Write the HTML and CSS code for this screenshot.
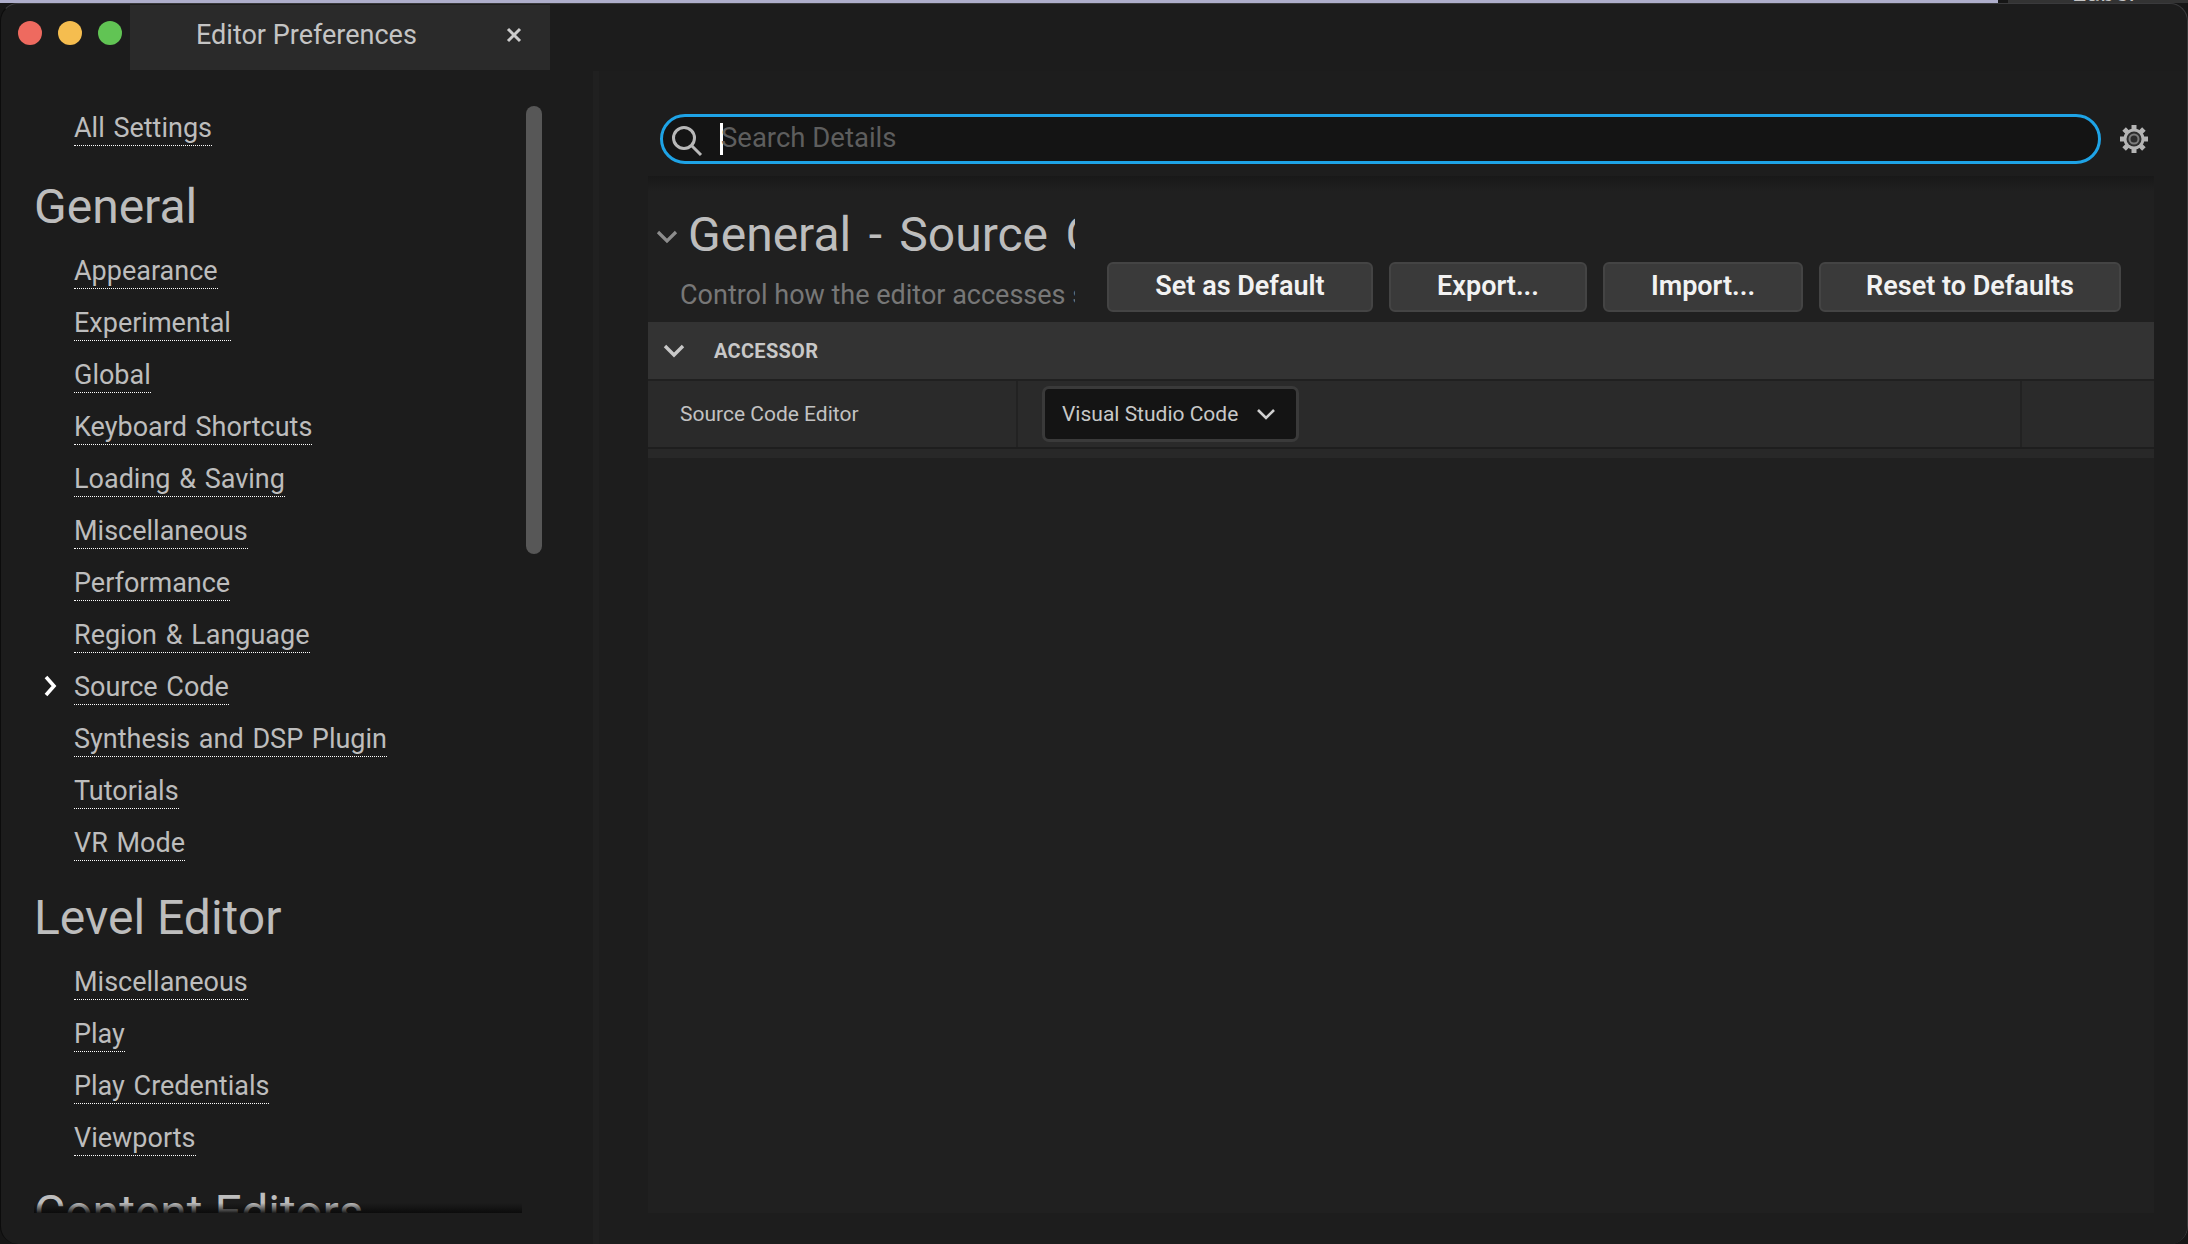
FILE: index.html
```html
<!DOCTYPE html>
<html lang="en">
<head>
    <meta charset="UTF-8">
    <meta name="viewport" content="width=device-width, initial-scale=1.0">
    <title>Editor Preferences</title>
    <link rel="stylesheet" href="styles.css">
</head>
<body>
    <div class="desktop-strip">
        <div class="strip-bar"></div>
        <div class="strip-tabs"><span>Label</span></div>
    </div>
    <div class="window">
        <div class="titlebar">
            <div class="lights">
                <span class="light red"></span>
                <span class="light yellow"></span>
                <span class="light green"></span>
            </div>
            <div class="tab">
                <span class="tab-title">Editor Preferences</span>
                <svg class="tab-close" width="16" height="16" viewBox="0 0 16 16"><path d="M2 2l12 12M14 2L2 14" stroke="#ccc" stroke-width="3" fill="none"/></svg>
            </div>
        </div>
        <div class="main">
            <nav class="sidebar">
                <div class="nav-scroll">
                    <div class="nav-list">
                        <div class="nav-row"><a class="nav-link">All Settings</a></div>
                    </div>
                    <h2 class="nav-heading nav-heading-first">General</h2>
                    <div class="nav-list">
                        <div class="nav-row"><a class="nav-link">Appearance</a></div>
                        <div class="nav-row"><a class="nav-link">Experimental</a></div>
                        <div class="nav-row"><a class="nav-link">Global</a></div>
                        <div class="nav-row"><a class="nav-link">Keyboard Shortcuts</a></div>
                        <div class="nav-row"><a class="nav-link">Loading &amp; Saving</a></div>
                        <div class="nav-row"><a class="nav-link">Miscellaneous</a></div>
                        <div class="nav-row"><a class="nav-link">Performance</a></div>
                        <div class="nav-row"><a class="nav-link">Region &amp; Language</a></div>
                        <div class="nav-row">
                            <svg class="nav-arrow" width="14" height="22" viewBox="0 0 14 22"><path d="M3 2l8 9-8 9" stroke="#fff" stroke-width="3.6" fill="none"/></svg>
                            <a class="nav-link">Source Code</a>
                        </div>
                        <div class="nav-row"><a class="nav-link">Synthesis and DSP Plugin</a></div>
                        <div class="nav-row"><a class="nav-link">Tutorials</a></div>
                        <div class="nav-row"><a class="nav-link">VR Mode</a></div>
                    </div>
                    <h2 class="nav-heading">Level Editor</h2>
                    <div class="nav-list">
                        <div class="nav-row"><a class="nav-link">Miscellaneous</a></div>
                        <div class="nav-row"><a class="nav-link">Play</a></div>
                        <div class="nav-row"><a class="nav-link">Play Credentials</a></div>
                        <div class="nav-row"><a class="nav-link">Viewports</a></div>
                    </div>
                    <h2 class="nav-heading">Content Editors</h2>
                    <div class="scrollbar"></div>
                </div>
                <div class="nav-fade"></div>
            </nav>
            <div class="splitter"></div>
            <section class="content">
                <div class="search-row">
                    <div class="search-box">
                        <svg class="search-icon" width="32" height="32" viewBox="0 0 32 32"><circle cx="13" cy="13" r="10.500" stroke="#b8b8b8" stroke-width="3" fill="none"/><path d="M20.500 20.500l9.500 9.500" stroke="#b8b8b8" stroke-width="3" fill="none"/></svg>
                        <span class="caret"></span>
                        <span class="search-text">Search Details</span>
                    </div>
                    <svg class="gear" width="30" height="30" viewBox="0 0 30 30">
                        <path d="M15 1v28M1 15h28M5.100 5.100l19.800 19.800M24.900 5.100L5.100 24.900" stroke="#b4b4b4" stroke-width="5" fill="none"/>
                        <circle cx="15" cy="15" r="10.500" fill="#b4b4b4"/>
                        <circle cx="15" cy="15" r="7.500" fill="#2c2c2c"/>
                        <circle cx="15" cy="15" r="4.500" stroke="#7a7a7a" stroke-width="2" fill="none"/>
                    </svg>
                </div>
                <div class="details">
                    <div class="details-head">
                        <div class="details-intro">
                            <div class="details-title">
                                <svg width="22" height="15" viewBox="0 0 22 15"><path d="M2 2l9 9 9-9" stroke="#8c8c8c" stroke-width="3.200" fill="none"/></svg>
                                <h1>General - Source Code</h1>
                            </div>
                            <p>Control how the editor accesses source code</p>
                        </div>
                        <div class="actions">
                            <button class="btn btn-default">Set as Default</button>
                            <button class="btn btn-export">Export...</button>
                            <button class="btn btn-import">Import...</button>
                            <button class="btn btn-reset">Reset to Defaults</button>
                        </div>
                    </div>
                    <div class="category">
                        <svg width="22" height="14" viewBox="0 0 22 14"><path d="M2 2l9 9 9-9" stroke="#c8c8c8" stroke-width="3.400" fill="none"/></svg>
                        <span>ACCESSOR</span>
                    </div>
                    <div class="prop-row">
                        <div class="prop-name">Source Code Editor</div>
                        <div class="prop-value">
                            <div class="combo">
                                <span>Visual Studio Code</span>
                                <svg width="20" height="12" viewBox="0 0 20 12"><path d="M2 2l8 8 8-8" stroke="#d0d0d0" stroke-width="2.600" fill="none"/></svg>
                            </div>
                        </div>
                        <div class="prop-reset"></div>
                    </div>
                    <div class="prop-foot"></div>
                </div>
            </section>
        </div>
    </div>
</body>
</html>
```

FILE: styles.css
```css
html, body {
    margin: 0;
    height: 100%;
}

body {
    background-color: #161616;
    font-family: Roboto, "Noto Sans", sans-serif;
    overflow: hidden;
}

/* sliver of the desktop above the window */
.desktop-strip {
    display: flex;
    height: 3px;
    overflow: hidden;
}

.strip-bar {
    width: 1998px;
    background-color: #aeaecb;
}

.strip-tabs {
    flex: 1;
    margin-left: 10px;
    background-color: #333;
    color: #c4c4c4;
    font-size: 26px;
    line-height: 20px;
}

.strip-tabs span {
    display: block;
    margin: -18px 0 0 64px;
}

.window {
    box-sizing: border-box;
    height: 1241px;
    background-color: #1c1c1c;
    border: 1px solid #3a3a3c;
    border-left-color: #0c0c0c;
    border-bottom: none;
    border-radius: 18px;
    overflow: hidden;
}

/* title bar */
.titlebar {
    display: flex;
    height: 67px;
    padding-top: 1px;
    box-sizing: border-box;
}

.lights {
    display: flex;
    gap: 16px;
    width: 129px;
    box-sizing: border-box;
    padding: 16px 0 0 17px;
}

.light {
    width: 24px;
    height: 24px;
    border-radius: 50%;
}

.red { background-color: #ee6a5f; }
.yellow { background-color: #f5bd4f; }
.green { background-color: #61c454; }

.tab {
    display: flex;
    align-items: center;
    width: 420px;
    height: 65px;
    box-sizing: border-box;
    padding: 0 28px 5px 66px;
    background-color: #2a2a2a;
    color: #c4c4c4;
    font-size: 27px;
}

.tab-title {
    flex: 1;
}

/* layout */
.main {
    display: flex;
    height: 1173px;
}

.sidebar {
    position: relative;
    width: 592px;
    flex-shrink: 0;
}

.nav-scroll {
    position: relative;
    height: 1142px;
    padding: 29px 0 0 33px;
    box-sizing: border-box;
    overflow: hidden;
}

.nav-row {
    display: flex;
    align-items: center;
    height: 52px;
    padding-left: 40px;
    position: relative;
}

.nav-link {
    color: #bdbdbd;
    font-size: 27px;
    line-height: 34px;
    word-spacing: 2px;
    border-bottom: 1px dotted #fff;
    margin-top: 5px;
}

.nav-arrow {
    position: absolute;
    left: 9px;
    top: 16px;
}

.nav-heading {
    margin: 0;
    height: 72px;
    line-height: 72px;
    padding-top: 15px;
    color: #bdbdbd;
    font-size: 48px;
    font-weight: 400;
}

.nav-heading-first {
    height: 73px;
    line-height: 73px;
    padding-top: 18px;
}

.scrollbar {
    position: absolute;
    left: 525px;
    top: 35px;
    width: 16px;
    height: 448px;
    background-color: #575757;
    border-radius: 8px;
}

.nav-fade {
    position: absolute;
    left: 33px;
    width: 488px;
    top: 1132px;
    height: 10px;
    background: linear-gradient(rgba(10, 10, 10, 0), rgba(10, 10, 10, 0.9));
}

.splitter {
    width: 6px;
    flex-shrink: 0;
    background-color: #202020;
}

.content {
    flex: 1;
    min-width: 0;
    padding: 0 0 0 49px;
    background-color: #1d1d1d;
}

/* search */
.search-row {
    display: flex;
    align-items: center;
    height: 105px;
    box-sizing: border-box;
    padding: 31px 0 0 12px;
}

.search-box {
    display: flex;
    align-items: center;
    width: 1441px;
    height: 50px;
    box-sizing: border-box;
    padding-left: 8px;
    background-color: #141414;
    border: 3px solid #1ea3e6;
    border-radius: 25px;
}

.search-icon {
    margin-top: 3px;
}

.caret {
    width: 3px;
    height: 32px;
    margin-left: 17px;
    background-color: #fff;
}

.search-text {
    margin-left: -2px;
    padding-bottom: 4px;
    color: #5e5e5e;
    font-size: 27.5px;
}

.gear {
    margin-left: 18px;
}

/* details panel */
.details {
    width: 1506px;
    height: 1037px;
    background: linear-gradient(#181818, #202020 16px);
}

.details-head {
    display: flex;
    height: 146px;
    box-sizing: border-box;
    padding-top: 16px;
}

.details-intro {
    width: 427px;
    overflow: hidden;
    white-space: nowrap;
    flex-shrink: 0;
}

.details-title {
    display: flex;
    align-items: center;
    gap: 10px;
    padding: 16px 0 0 8px;
}

.details-title svg {
    flex-shrink: 0;
    margin-top: 4px;
}

.details-title h1 {
    margin: 0;
    color: #bdbdbd;
    font-size: 48px;
    font-weight: 400;
    line-height: 54px;
    word-spacing: 5.5px;
}

.details-intro p {
    margin: 15px 0 0 32px;
    color: #777;
    font-size: 27px;
    line-height: 36px;
}

.actions {
    display: flex;
    gap: 16px;
    margin: 70px 0 0 32px;
}

.btn {
    height: 50px;
    box-sizing: border-box;
    padding: 0 0 3px;
    background-color: #3a3a3a;
    border: 2px solid #444;
    border-radius: 6px;
    color: #f2f2f2;
    font-family: inherit;
    font-size: 27px;
    font-weight: 600;
}

.btn-default { width: 266px; }
.btn-export { width: 198px; }
.btn-import { width: 200px; }
.btn-reset { width: 302px; }

.category {
    display: flex;
    align-items: center;
    gap: 29px;
    height: 57px;
    padding-left: 15px;
    background-color: #333;
    color: #c8c8c8;
    font-size: 20px;
    font-weight: 700;
    letter-spacing: 0.3px;
}

.prop-row {
    display: flex;
    height: 66px;
    margin-top: 2px;
    background-color: #2a2a2a;
    border-bottom: 2px solid #1e1e1e;
}

.prop-name {
    display: flex;
    align-items: center;
    width: 336px;
    padding-left: 32px;
    color: #c2c2c2;
    font-size: 21px;
    border-right: 2px solid #222;
}

.prop-value {
    flex: 1;
    padding: 5px 0 0 24px;
    border-right: 2px solid #222;
}

.prop-reset {
    width: 132px;
}

.combo {
    display: flex;
    align-items: center;
    justify-content: space-between;
    width: 257px;
    height: 56px;
    box-sizing: border-box;
    padding: 0 20px 0 17px;
    background-color: #141414;
    border: 3px solid #3a3a3a;
    border-radius: 7px;
    color: #c8c8c8;
    font-size: 21px;
}

.prop-foot {
    height: 9px;
    background-color: #282828;
}
```
